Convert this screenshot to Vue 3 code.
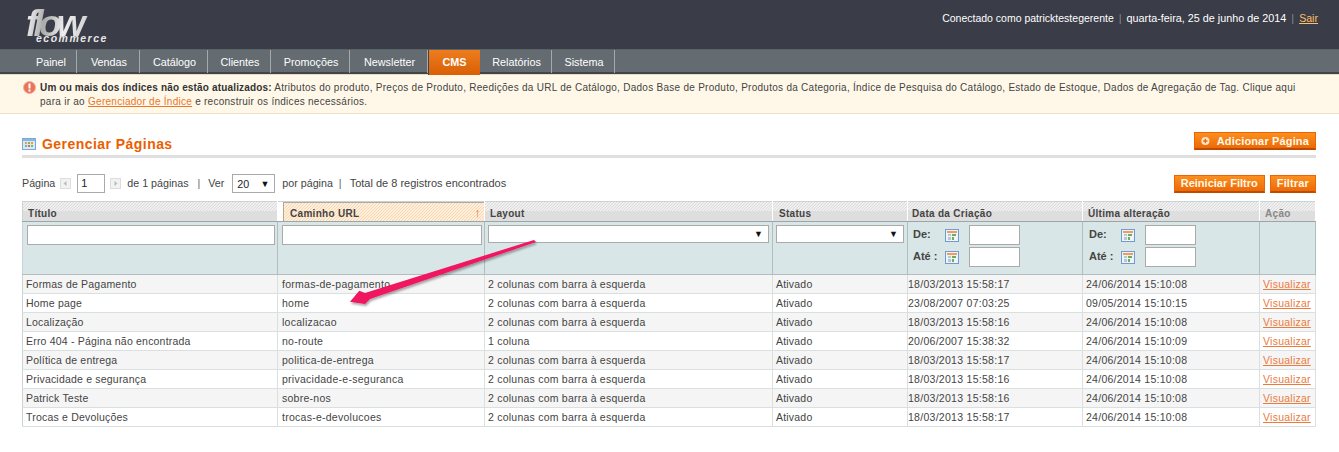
<script setup>
const nav = [
  { label: 'Painel', w: 77 },
  { label: 'Vendas', w: 63 },
  { label: 'Catálogo', w: 68 },
  { label: 'Clientes', w: 63 },
  { label: 'Promoções', w: 79 },
  { label: 'Newsletter', w: 78 },
  { label: 'CMS', w: 52, active: true },
  { label: 'Relatórios', w: 72 },
  { label: 'Sistema', w: 63 },
]
const L2 = '2 colunas com barra à esquerda'
const rows = [
  ['Formas de Pagamento', 'formas-de-pagamento', L2, '18/03/2013 15:58:17', '24/06/2014 15:10:08'],
  ['Home page', 'home', L2, '23/08/2007 07:03:25', '09/05/2014 15:10:15'],
  ['Localização', 'localizacao', L2, '18/03/2013 15:58:16', '24/06/2014 15:10:08'],
  ['Erro 404 - Página não encontrada', 'no-route', '1 coluna', '20/06/2007 15:38:32', '24/06/2014 15:10:09'],
  ['Política de entrega', 'politica-de-entrega', L2, '18/03/2013 15:58:17', '24/06/2014 15:10:08'],
  ['Privacidade e segurança', 'privacidade-e-seguranca', L2, '18/03/2013 15:58:16', '24/06/2014 15:10:08'],
  ['Patrick Teste', 'sobre-nos', L2, '18/03/2013 15:58:16', '24/06/2014 15:10:08'],
  ['Trocas e Devoluções', 'trocas-e-devolucoes', L2, '18/03/2013 15:58:17', '24/06/2014 15:10:08'],
]
const dateCols = ['created', 'updated']
</script>

<template>
  <div class="page">
    <header class="top">
      <div class="logo">
        <span class="flow">flow</span>
        <span class="eco">ecommerce</span>
      </div>
      <div class="user">
        <span class="who">Conectado como patricktestegerente</span>
        <i>|</i>
        <span class="when">quarta-feira, 25 de junho de 2014</span>
        <i>|</i>
        <a>Sair</a>
      </div>
    </header>
    <nav class="nav">
      <a v-for="n in nav" :key="n.label" class="navitem" :class="{ active: n.active }" :style="{ width: n.w + 'px' }">{{ n.label }}</a>
    </nav>
    <div class="notice">
      <svg class="warn" width="13" height="13" viewBox="0 0 13 13">
        <circle cx="6.5" cy="6.5" r="6" fill="#e8745a" stroke="#f2b09c" />
        <rect x="5.5" y="2.5" width="2" height="5" fill="#fff" />
        <rect x="5.5" y="8.5" width="2" height="2" fill="#fff" />
      </svg>
      <div class="msg">
        <div class="line"><b>Um ou mais dos índices não estão atualizados:</b> Atributos do produto, Preços de Produto, Reedições da URL de Catálogo, Dados Base de Produto, Produtos da Categoria, Índice de Pesquisa do Catálogo, Estado de Estoque, Dados de Agregação de Tag. Clique aqui</div>
        <div class="line">para ir ao <a>Gerenciador de Índice</a> e reconstruir os índices necessários.</div>
      </div>
    </div>
    <main class="main">
      <div class="titlebar">
        <h1>
          <svg width="14" height="12" viewBox="0 0 14 12">
            <rect x=".5" y=".5" width="13" height="11" fill="#d8e8f8" stroke="#7fa6d6" />
            <rect x="1" y="1" width="12" height="2" fill="#8fb4e0" />
            <rect x="3" y="4" width="2" height="2" fill="#e8a23c" />
            <rect x="6" y="4" width="2" height="2" fill="#7cb86a" />
            <rect x="9" y="4" width="2" height="2" fill="#e8a23c" />
            <rect x="3" y="7" width="2" height="2" fill="#7cb86a" />
            <rect x="6" y="7" width="2" height="2" fill="#e26a4a" />
            <rect x="9" y="7" width="2" height="2" fill="#7cb86a" />
          </svg>
          Gerenciar Páginas
        </h1>
        <button class="btn add">
          <svg width="12" height="12" viewBox="0 0 12 12">
            <circle cx="6" cy="6" r="5.5" fill="#fde6cc" />
            <rect x="3" y="5" width="6" height="2" fill="#e8690c" />
            <rect x="5" y="3" width="2" height="6" fill="#e8690c" />
          </svg>
          Adicionar Página
        </button>
      </div>
      <div class="pager">
        <div class="pageinfo">
          <span>Página</span>
          <svg class="arr" width="11" height="11" viewBox="0 0 11 11">
            <rect x=".5" y=".5" width="10" height="10" fill="#f2f2f2" stroke="#ddd" />
            <polygon points="6.5,3 6.5,8 3.5,5.5" fill="#bbb" />
          </svg>
          <input class="pageinput" value="1" />
          <svg class="arr" width="11" height="11" viewBox="0 0 11 11">
            <rect x=".5" y=".5" width="10" height="10" fill="#f2f2f2" stroke="#ddd" />
            <polygon points="4.5,3 4.5,8 7.5,5.5" fill="#bbb" />
          </svg>
          <span>de 1 páginas</span>
          <i>|</i>
          <span>Ver</span>
          <span class="sel">20<em>▼</em></span>
          <span>por página</span>
          <i class="tight">|</i>
          <span class="total">Total de 8 registros encontrados</span>
        </div>
        <div class="actions">
          <button class="btn">Reiniciar Filtro</button>
          <button class="btn">Filtrar</button>
        </div>
      </div>
      <table class="grid">
        <colgroup>
          <col style="width:255px" /><col style="width:207px" /><col style="width:288px" />
          <col style="width:135px" /><col style="width:175px" /><col style="width:177px" /><col />
        </colgroup>
        <thead>
          <tr class="heads">
            <th>Título</th>
            <th class="sorted"><span>Caminho URL<em>↑</em></span></th>
            <th>Layout</th>
            <th class="h-status">Status</th>
            <th class="h-date">Data da Criação</th>
            <th>Última alteração</th>
            <th class="muted">Ação</th>
          </tr>
          <tr class="filters">
            <th><input class="txt" /></th>
            <th><input class="txt" /></th>
            <th class="selcell"><span class="fsel">▼</span></th>
            <th class="selcell"><span class="fsel">▼</span></th>
            <th v-for="c in dateCols" :key="c" :class="c">
              <div class="range">
                <div class="rline">
                  <label>De:</label>
                  <svg class="cal" width="14" height="13" viewBox="0 0 14 13">
                    <rect x=".5" y=".5" width="13" height="12" fill="#eef4fa" stroke="#6f9bd0" />
                    <rect x="2" y="2" width="10" height="2" fill="#f09a5c" />
                    <rect x="3" y="5" width="3" height="2" fill="#b9c6d0" />
                    <rect x="7" y="5" width="4" height="2" fill="#6cae5c" />
                    <rect x="3" y="8" width="3" height="3" fill="#b9c6d0" />
                    <rect x="7" y="8" width="2" height="3" fill="#6cae5c" />
                  </svg>
                  <input class="dt" />
                </div>
                <div class="rline">
                  <label>Até :</label>
                  <svg class="cal" width="14" height="13" viewBox="0 0 14 13">
                    <rect x=".5" y=".5" width="13" height="12" fill="#eef4fa" stroke="#6f9bd0" />
                    <rect x="2" y="2" width="10" height="2" fill="#f09a5c" />
                    <rect x="3" y="5" width="3" height="2" fill="#b9c6d0" />
                    <rect x="7" y="5" width="4" height="2" fill="#6cae5c" />
                    <rect x="3" y="8" width="3" height="3" fill="#b9c6d0" />
                    <rect x="7" y="8" width="2" height="3" fill="#6cae5c" />
                  </svg>
                  <input class="dt" />
                </div>
              </div>
            </th>
            <th></th>
          </tr>
        </thead>
        <tbody>
          <tr v-for="(r, i) in rows" :key="r[1]" :class="{ even: i % 2 === 0 }">
            <td class="c1">{{ r[0] }}</td>
            <td class="c2">{{ r[1] }}</td>
            <td class="c3">{{ r[2] }}</td>
            <td class="c4">Ativado</td>
            <td class="c5">{{ r[3] }}</td>
            <td class="c6">{{ r[4] }}</td>
            <td class="c7"><a>Visualizar</a></td>
          </tr>
        </tbody>
      </table>
    </main>
    <svg class="arrow" width="200" height="75" viewBox="340 235 200 75">
      <defs>
        <filter id="sh" x="-10%" y="-10%" width="120%" height="130%">
          <feDropShadow dx="1" dy="2" stdDeviation="1.2" flood-color="#000" flood-opacity=".35" />
        </filter>
      </defs>
      <polygon points="534,240 536,242 370,299 365,304 350,301.7 359.3,290.7 365,293" fill="#f0145f" filter="url(#sh)" />
    </svg>
  </div>
</template>

<style>
html, body { margin: 0; background: #fff; }
</style>

<style scoped>
.page {
  position: relative;
  width: 1339px;
  height: 452px;
  overflow: hidden;
  font-family: "Liberation Sans", Arial, sans-serif;
  font-size: 11px;
  color: #444;
}
.top {
  height: 49px;
  background: #3a3c47;
  display: flex;
  justify-content: space-between;
  box-sizing: border-box;
}
.logo { position: relative; width: 140px; color: #e8e8e8; }
.flow {
  position: absolute;
  left: 26px;
  top: 4px;
  font-size: 37px;
  font-weight: bold;
  font-style: italic;
  letter-spacing: -4.8px;
  line-height: 40px;
  padding-right: 8px;
  background: linear-gradient(100deg, #fff 0%, #aaa 30%, #eee 60%, #ccc 100%);
  -webkit-background-clip: text;
  background-clip: text;
  color: transparent;
}
.eco {
  position: absolute;
  left: 36px;
  top: 32px;
  font-size: 10.5px;
  font-weight: bold;
  font-style: italic;
  letter-spacing: 1.5px;
  line-height: 12px;
}
.user {
  display: flex;
  color: #fff;
  padding: 12px 21px 0 0;
  line-height: 13px;
}
.who { font-size: 10.5px; }
.when { font-size: 10.8px; }
.user i { font-style: normal; color: #888; margin: 0 5px; }
.user a { color: #fbc06a; text-decoration: underline; font-size: 10.6px; }
.nav {
  height: 25px;
  box-sizing: border-box;
  background: #646c72;
  border-top: 1px solid #596368;
  border-bottom: 2px solid #3f4549;
  display: flex;
}
.navitem {
  box-sizing: border-box;
  height: 23px;
  padding-left: 2px;
  line-height: 24px;
  text-align: center;
  color: #fff;
  font-size: 10.8px;
  border-right: 1px solid #a3a9ad;
}
.navitem:first-child { text-align: right; padding-right: 10px; }
.navitem.active {
  background: linear-gradient(#ee7d1e, #d95f05);
  font-weight: bold;
  border-right: 0;
  border-left: 1px solid #3f4549;
  padding-left: 0;
  height: 25px;
  margin-bottom: -2px;
}
.notice {
  height: 40px;
  box-sizing: border-box;
  background: #fff8e9;
  border-bottom: 1px solid #ece0c6;
  border-top: 1px solid #e8dcc4;
  display: flex;
  padding: 6px 0 0 23px;
  color: #444;
  font-size: 10px;
  letter-spacing: .27px;
  line-height: 14px;
}
.warn { margin: 0 4px 0 0; flex: none; }
.line { white-space: nowrap; }
.notice b { color: #333; letter-spacing: .16px; }
.notice a { color: #e8762c; text-decoration: underline; }
.main { padding: 0 23px 0 22px; }
.titlebar {
  height: 26px;
  margin-top: 18px;
  box-sizing: border-box;
  border-bottom: 3px solid #dfdfdf;
  display: flex;
  justify-content: space-between;
  align-items: flex-start;
}
h1 {
  margin: 3px 0 0;
  color: #eb5e00;
  font-size: 14px;
  font-weight: bold;
  line-height: 18px;
  letter-spacing: .45px;
  display: flex;
  align-items: center;
  gap: 6px;
}
.btn {
  height: 18px;
  box-sizing: border-box;
  border: 1px solid #ed6502;
  border-bottom-color: #c04a00;
  border-bottom-width: 2px;
  background: linear-gradient(#fc8f1e, #ec6a08);
  color: #fff8e8;
  font: bold 11px/14px "Liberation Sans", Arial, sans-serif;
  letter-spacing: .15px;
  padding: 0 6px;
  display: inline-flex;
  align-items: center;
  gap: 7px;
  white-space: nowrap;
}
.add { width: 122px; padding-left: 6px; }
.pager {
  display: flex;
  justify-content: space-between;
  align-items: center;
  height: 20px;
  margin-top: 15px;
}
.pageinfo { display: flex; align-items: center; line-height: 13px; font-size: 10.7px; }
.pageinfo i { font-style: normal; margin: 0 8px 0 9px; color: #666; }
.pageinfo i.tight { margin: 0 8px 0 6px; }
.total { font-size: 11px; }
.arr { margin: 0 6px 0 5px; flex: none; }
.pageinput {
  width: 28px;
  height: 19px;
  box-sizing: border-box;
  border: 1px solid #aaa;
  padding: 0 0 0 3px;
  font: 11px "Liberation Sans", sans-serif;
  color: #222;
}
.sel {
  width: 43px;
  height: 19px;
  box-sizing: border-box;
  border: 1px solid #aaa;
  margin: 0 7px 0 8px;
  padding: 3px 0 0 4px;
  display: flex;
  justify-content: space-between;
  color: #222;
  background: #fff;
}
.sel em { font-style: normal; font-size: 9px; margin-right: 5px; color: #111; }
.actions { display: flex; gap: 5px; }
.actions .btn { height: 18px; padding: 0 6px; margin-top: 1px; }
.actions .btn:first-child { letter-spacing: 0; }
.grid {
  table-layout: fixed;
  width: 1294px;
  margin-top: 8px;
  border-collapse: collapse;
  border: 1px solid #cbd3d4;
}
.heads th {
  height: 20px;
  box-sizing: border-box;
  padding: 3px 0 0 5px;
  text-align: left;
  font-weight: bold;
  font-size: 10px;
  letter-spacing: .3px;
  color: #444;
  border-right: 1px solid #fff;
  border-bottom: 1px solid #9da5a7;
  background:
    repeating-linear-gradient(135deg, #dcdcdc 0 .7px, #efefef .7px 2.121px) top / 100% 9px no-repeat,
    #dedede;
}
.heads th.h-status { padding-left: 6px; }
.heads th.h-date { padding-left: 4px; }
.heads th.muted { color: #888; }
.heads th.sorted {
  padding: 0 0 0 5px;
  background: #fff;
}
.sorted span {
  display: flex;
  justify-content: space-between;
  height: 19px;
  box-sizing: border-box;
  padding: 5px 3px 0 6px;
  border-left: 1px solid #b9a58c;
  border-top: 1px solid #aaa;
  background: repeating-linear-gradient(135deg, #fad6ae 0 .7px, #fff0de .7px 2.121px);
  color: #444;
}
.sorted em { font-style: normal; color: #ec7a1a; font-weight: bold; font-size: 13px; line-height: 10px; }
.filters th {
  height: 53px;
  box-sizing: border-box;
  padding: 3px 2px 0 4px;
  vertical-align: top;
  border-right: 1px solid #b3bcbe;
  border-bottom: 1px solid #b3bcbe;
  background-color: #d8e6e8;
  background-image: radial-gradient(#c9dadc 35%, transparent 40%);
  background-size: 2px 2px;
  text-align: left;
}
.filters th.selcell { padding-left: 3px; padding-right: 3px; }
.filters th.updated { padding-left: 5px; }
.txt {
  display: block;
  width: 100%;
  height: 20px;
  box-sizing: border-box;
  border: 1px solid #aaa;
  background: #fff;
  padding: 0;
}
.fsel {
  display: block;
  height: 18px;
  box-sizing: border-box;
  background: #fff;
  border: 1px solid #aaa;
  text-align: right;
  padding-right: 5px;
  font-size: 9px;
  line-height: 16px;
  color: #111;
  font-weight: normal;
}
.range { display: flex; flex-direction: column; gap: 2px; }
.rline { display: flex; align-items: center; height: 20px; font-size: 11px; color: #444; }
.rline label { width: 33px; padding: 0 0 3px 1px; box-sizing: border-box; }
.cal { margin-right: 10px; flex: none; }
.dt {
  width: 51px;
  height: 20px;
  box-sizing: border-box;
  border: 1px solid #aaa;
  background: #fff;
  padding: 0;
}
tbody td {
  height: 19px;
  box-sizing: border-box;
  padding: 0 0 0 3px;
  border-right: 1px solid #dadfe0;
  border-bottom: 1px solid #dadfe0;
  color: #444;
  font-size: 10.5px;
  white-space: nowrap;
  overflow: hidden;
  line-height: 18px;
}
.c1 { letter-spacing: .2px; }
.c2 { letter-spacing: .26px; padding-left: 4px !important; }
.c3 { letter-spacing: .23px; }
.c4 { letter-spacing: .2px; }
.c5 { letter-spacing: .28px; padding-left: 0 !important; }
.c6 { letter-spacing: .26px; }
.c7 { letter-spacing: .25px; }
tbody tr.even td { background: #f5f5f5; }
tbody a { color: #ea7b3c; text-decoration: underline; }
.arrow { position: absolute; left: 340px; top: 235px; pointer-events: none; }
</style>
